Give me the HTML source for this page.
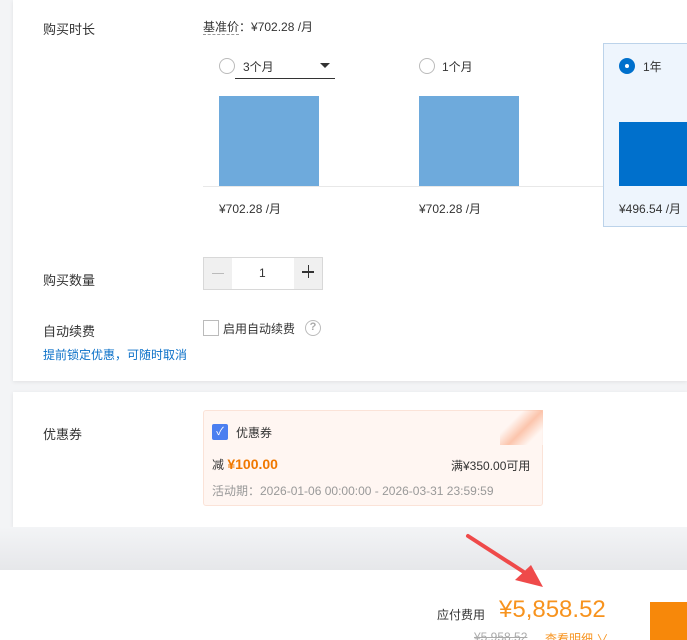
<!DOCTYPE html>
<html><head><meta charset="utf-8"><style>
*{margin:0;padding:0;box-sizing:border-box}
html,body{width:687px;height:640px;overflow:hidden}
body{background:#f3f4f6;font-family:"Liberation Sans","Noto Sans CJK SC",sans-serif;color:#333;position:relative;font-size:12px}
.a{position:absolute}
.panel{position:absolute;left:13px;right:0;background:#fff;box-shadow:0 1px 4px rgba(0,0,0,.08)}
.lbl{font-size:13px;color:#333}
.radio{width:16px;height:16px;border:1px solid #bbb;border-radius:50%;background:#fff}
.bar{background:#6eaadc}
</style></head><body>
<div class="panel" style="top:0;height:381px"></div>
<div class="a lbl" style="left:43px;top:19px">购买时长</div>
<div class="a" style="left:203px;top:18px;font-size:12px"><span style="border-bottom:1px dashed #999">基准价</span>：¥702.28 /月</div>
<div class="a radio" style="left:219px;top:58px"></div>
<div class="a" style="left:243px;top:58px">3个月</div>
<div class="a" style="left:235px;top:78px;width:100px;border-top:1px solid #333"></div>
<div class="a" style="left:320px;top:63px;border:5px solid transparent;border-top:5px solid #333"></div>
<div class="a bar" style="left:219px;top:96px;width:100px;height:90px"></div>
<div class="a radio" style="left:419px;top:58px"></div>
<div class="a" style="left:442px;top:58px">1个月</div>
<div class="a bar" style="left:419px;top:96px;width:100px;height:90px"></div>
<div class="a" style="left:203px;top:186px;width:400px;border-top:1px solid #e8e8e8"></div>
<div class="a" style="left:603px;top:43px;width:90px;height:184px;background:#eef5fd;border:1px solid #bcd3ea"></div>
<div class="a" style="left:619px;top:58px;width:16px;height:16px;border-radius:50%;background:#0070cc"></div>
<div class="a" style="left:625px;top:64px;width:4px;height:4px;border-radius:50%;background:#fff"></div>
<div class="a" style="left:643px;top:58px">1年</div>
<div class="a" style="left:619px;top:122px;width:68px;height:64px;background:#0070cc"></div>
<div class="a" style="left:219px;top:200px">¥702.28 /月</div>
<div class="a" style="left:419px;top:200px">¥702.28 /月</div>
<div class="a" style="left:619px;top:200px">¥496.54 /月</div>

<div class="a lbl" style="left:43px;top:270px">购买数量</div>
<div class="a" style="left:203px;top:257px;width:120px;height:33px;border:1px solid #d8d8d8;background:#fff"></div>
<div class="a" style="left:204px;top:258px;width:28px;height:31px;background:#f0f0f0"></div>
<div class="a" style="left:212px;top:273px;width:12px;height:1px;background:#bbb"></div>
<div class="a" style="left:294px;top:258px;width:28px;height:31px;background:#f0f0f0"></div>
<div class="a" style="left:302px;top:271px;width:12px;height:1.5px;background:#333"></div>
<div class="a" style="left:307.5px;top:265px;width:1.5px;height:13px;background:#333"></div>
<div class="a" style="left:259px;top:266px">1</div>

<div class="a lbl" style="left:43px;top:321px">自动续费</div>
<div class="a" style="left:203px;top:320px;width:16px;height:16px;border:1px solid #bbb"></div>
<div class="a" style="left:223px;top:320px">启用自动续费</div>
<div class="a" style="left:305px;top:320px;width:16px;height:16px;border:1.5px solid #bbb;border-radius:50%;color:#aaa;font-size:11px;text-align:center;line-height:13px;font-weight:bold">?</div>
<div class="a" style="left:43px;top:346px;color:#0a70c8">提前锁定优惠，可随时取消</div>

<div class="panel" style="top:392px;height:135px"></div>
<div class="a lbl" style="left:43px;top:424px">优惠券</div>
<div class="a" style="left:203px;top:410px;width:340px;height:96px;background:#fff6f2;border:1px solid #fbe3d8;border-radius:3px"></div>
<div class="a" style="left:212px;top:424px;width:16px;height:16px;background:#4b7ff0;border-radius:2px;color:#fff;font-size:11px;text-align:center;line-height:16px">✓</div>
<div class="a" style="left:236px;top:424px">优惠券</div>
<div class="a" style="left:212px;top:456px">减 <b style="color:#f07800;font-size:14px">¥100.00</b></div>
<div class="a" style="left:451px;top:457px">满¥350.00可用</div>
<div class="a" style="left:212px;top:482px;color:#999">活动期：2026-01-06 00:00:00 - 2026-03-31 23:59:59</div>
<div class="a" style="left:500px;top:410px;width:43px;height:35px;background:linear-gradient(135deg,transparent 30%,#fbb89a 55%,#fff6f2 80%);opacity:.8"></div>

<div class="a" style="left:0;top:527px;width:687px;height:43px;background:linear-gradient(#f3f4f6,#e6e7ea)"></div>
<div class="a" style="left:0;top:570px;width:687px;height:70px;background:#fff"></div>
<svg class="a" style="left:465px;top:532px" width="85" height="60"><line x1="3" y1="4" x2="65" y2="44" stroke="#ef4a4a" stroke-width="4" stroke-linecap="round"/><polygon points="78,55 50,48 66,33" fill="#ef4a4a"/></svg>
<div class="a" style="left:437px;top:606px;font-size:12px">应付费用</div>
<div class="a" style="left:499px;top:596px;font-size:24px;color:#f7931e">¥5,858.52</div>
<div class="a" style="left:474px;top:630px;color:#aaa;text-decoration:line-through">¥5,958.52</div>
<div class="a" style="left:545px;top:630px;color:#f7931e">查看明细 ∨</div>
<div class="a" style="left:650px;top:602px;width:37px;height:38px;background:#f7880a"></div>
</body></html>
